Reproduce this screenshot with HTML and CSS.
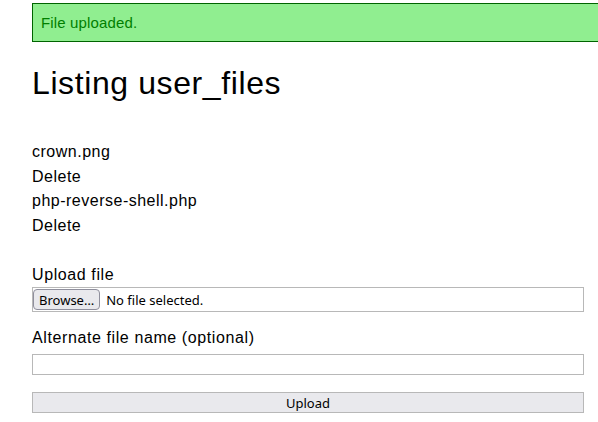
FILE: index.html
```html
<!DOCTYPE html>
<html>
<head>
<meta charset="utf-8">
<link rel="stylesheet" href="styles.css">
</head>
<body>
<div class="page">
  <div class="alert">File uploaded.</div>
  <h1 class="title">Listing user_files</h1>
  <ul class="files">
    <li>crown.png</li>
    <li>Delete</li>
    <li>php-reverse-shell.php</li>
    <li>Delete</li>
  </ul>
  <form class="form">
    <label class="label label-first">Upload file</label>
    <div class="file-input">
      <span class="browse">Browse…</span>
      <span class="file-status">No file selected.</span>
    </div>
    <label class="label label-second">Alternate file name (optional)</label>
    <div class="text-input"></div>
    <div class="submit">Upload</div>
  </form>
</div>
</body>
</html>
```

FILE: styles.css
```css
html, body {
  margin: 0;
  padding: 0;
  background: #ffffff;
  overflow: hidden;
}
body {
  font-family: "Liberation Sans", Arial, sans-serif;
  color: #000;
  width: 598px;
  height: 422px;
}
.page {
  padding: 3px 0 0 32px;
  display: flex;
  flex-direction: column;
}
.alert {
  width: 566px;
  box-sizing: border-box;
  background: #90ee90;
  border: 1px solid #006400;
  border-right: none;
  color: #008000;
  font-size: 15px;
  line-height: 17px;
  letter-spacing: 0.15px;
  padding: 10px 8px;
}
.title {
  margin: 22px 0 0;
  font-size: 32px;
  font-weight: normal;
  line-height: 38px;
  letter-spacing: 0.6px;
}
.files {
  list-style: none;
  margin: 38px 0 0;
  padding: 0;
  font-size: 16px;
  line-height: 24.5px;
  letter-spacing: 0.5px;
}
.form {
  display: flex;
  flex-direction: column;
  width: 552px;
  margin: 0;
}
.label {
  font-size: 16px;
  line-height: 24px;
  letter-spacing: 0.6px;
}
.label-first { margin-top: 25px; }
.label-second { margin-top: 14px; margin-bottom: 4px; }
.file-input {
  margin-top: 0;
  height: 25px;
  box-sizing: border-box;
  border: 1px solid #b8b8b8;
  display: flex;
  align-items: center;
  gap: 6px;
  font-family: "Noto Sans", sans-serif;
  font-size: 13px;
}
.browse {
  height: 21px;
  box-sizing: border-box;
  margin-left: 0;
  padding: 0 5px;
  background: #e9e9ed;
  border: 1px solid #8f8f9d;
  border-radius: 4px;
  display: flex;
  align-items: center;
  color: #000;
}
.file-status { color: #000; }
.text-input {
  height: 21px;
  box-sizing: border-box;
  border: 1px solid #b8b8b8;
  background: #fff;
}
.submit {
  margin-top: 17px;
  height: 21px;
  box-sizing: border-box;
  border: 1px solid #b8b8b8;
  background: #e9e9ed;
  font-family: "Noto Sans", sans-serif;
  font-size: 13px;
  display: flex;
  align-items: center;
  justify-content: center;
}
```
